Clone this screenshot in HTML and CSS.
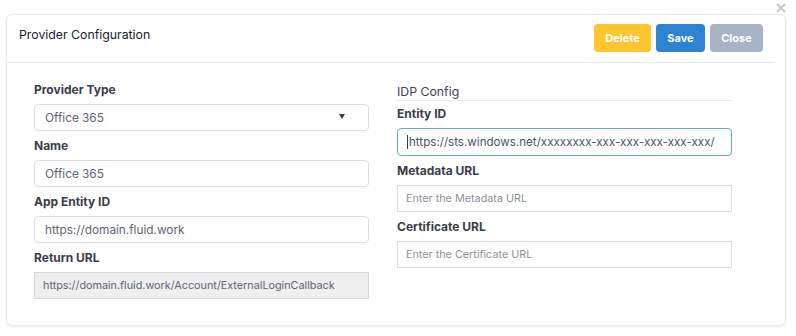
FILE: index.html
```html
<!DOCTYPE html>
<html lang="en">
<head>
    <meta charset="UTF-8">
    <meta name="viewport" content="width=device-width, initial-scale=1.0">
    <title>Provider Configuration</title>
    <link rel="stylesheet" href="styles.css">
</head>
<body>
    <svg class="dismiss" width="10" height="10" viewBox="0 0 10 10">
        <path d="M1 1 L9 9 M9 1 L1 9" stroke="#c6c8ce" stroke-width="2" fill="none"/>
    </svg>
    <div class="card">
        <div class="card-header">
            <h3 class="card-title">Provider Configuration</h3>
            <div class="actions">
                <button class="btn btn-delete">Delete</button>
                <button class="btn btn-save">Save</button>
                <button class="btn btn-close">Close</button>
            </div>
        </div>

        <div class="card-body">
            <!-- provider -->
            <div class="col">
                <label>Provider Type</label>
                <div class="select-wrap">
                    <select class="field">
                        <option>Office 365</option>
                    </select>
                    <span class="caret"></span>
                </div>

                <label>Name</label>
                <input class="field" type="text" value="Office 365">

                <label>App Entity ID</label>
                <input class="field" type="text" value="https://domain.fluid.work">

                <label>Return URL</label>
                <input class="field readonly" type="text" value="https://domain.fluid.work/Account/ExternalLoginCallback" readonly>
            </div>

            <!-- idp -->
            <div class="col">
                <div class="group-title">IDP Config</div>

                <label>Entity ID</label>
                <div class="select-wrap">
                    <input class="field square focused" type="text" value="https://sts.windows.net/xxxxxxxx-xxx-xxx-xxx-xxx-xxx/">
                    <span class="text-cursor"></span>
                </div>

                <label>Metadata URL</label>
                <input class="field square" type="text" placeholder="Enter the Metadata URL">

                <label>Certificate URL</label>
                <input class="field square" type="text" placeholder="Enter the Certificate URL">
            </div>
        </div>
    </div>
</body>
</html>
```

FILE: styles.css
```css
* {
    margin: 0;
    padding: 0;
    box-sizing: border-box;
    font-family: 'Inter', 'Liberation Sans', sans-serif;
}

body {
    background-color: #fff;
    color: #3f4254;
    padding: 14px 10px 10px 6px;
    position: relative;
}

.dismiss {
    position: absolute;
    top: 3px;
    right: 10px;
}

.card {
    border: 1px solid #e9e9f0;
    border-radius: 6px;
    background: #fff;
    height: 312px;
    box-shadow: 0 1px 3px rgba(30, 30, 60, 0.08);
}

.card-header {
    display: flex;
    justify-content: space-between;
    align-items: flex-start;
    height: 48px;
    margin-right: 10px;
    padding: 9px 12px 0 12px;
    border-bottom: 1px solid #e6e6ee;
}

.card-title {
    font-size: 12.3px;
    font-weight: 400;
    color: #181c32;
    line-height: 16px;
    margin-top: 3px;
}

.actions {
    display: flex;
    gap: 5px;
}

.btn {
    height: 28px;
    border: none;
    border-radius: 4px;
    color: #fff;
    font-size: 11px;
    font-weight: 700;
    padding: 0 10px;
    cursor: pointer;
}

.btn-delete {
    width: 57px;
    background-color: #fec52f;
}

.btn-save {
    width: 49px;
    background-color: #2d83d2;
}

.btn-close {
    width: 53px;
    background-color: #a9b3c8;
}

.card-body {
    display: grid;
    grid-template-columns: 335px 335px;
    column-gap: 28px;
    padding: 18px 27px 0;
}

.col {
    display: flex;
    flex-direction: column;
}

label {
    display: block;
    font-size: 12px;
    font-weight: 700;
    line-height: 17px;
    color: #3a3c4a;
    margin-bottom: 6px;
}

.field {
    width: 100%;
    height: 27px;
    border: 1px solid #dcdde4;
    border-radius: 4px;
    padding: 0 10px;
    font-size: 11.8px;
    color: #5e6278;
    background-color: #fff;
    margin-bottom: 6px;
    outline: none;
}

.field::placeholder {
    color: #8e909c;
}

.select-wrap {
    position: relative;
}

select.field {
    appearance: none;
    -webkit-appearance: none;
}

.caret {
    position: absolute;
    right: 24px;
    top: 10px;
    width: 0;
    height: 0;
    border-left: 3.5px solid transparent;
    border-right: 3.5px solid transparent;
    border-top: 5px solid #3a3c4a;
}

.text-cursor {
    position: absolute;
    left: 10px;
    top: 7px;
    width: 1px;
    height: 14px;
    background-color: #3a3c4a;
}

.readonly {
    background-color: #efefef;
    border-color: #d7d7dc;
    border-radius: 0;
    padding: 0 8px;
    font-size: 10.8px;
    color: #5e6278;
}

.square {
    border-radius: 0;
    padding: 0 8px;
    font-size: 10.8px;
}

.focused {
    border-color: #6aa5e6;
    border-radius: 4px;
    height: 28px;
    padding: 0 11px;
    font-size: 11.6px;
    color: #50535f;
}

.group-title {
    font-size: 12.3px;
    line-height: 16px;
    color: #3f4254;
    margin-top: 3px;
    border-bottom: 1px solid #ececf0;
    margin-bottom: 4px;
}
```
